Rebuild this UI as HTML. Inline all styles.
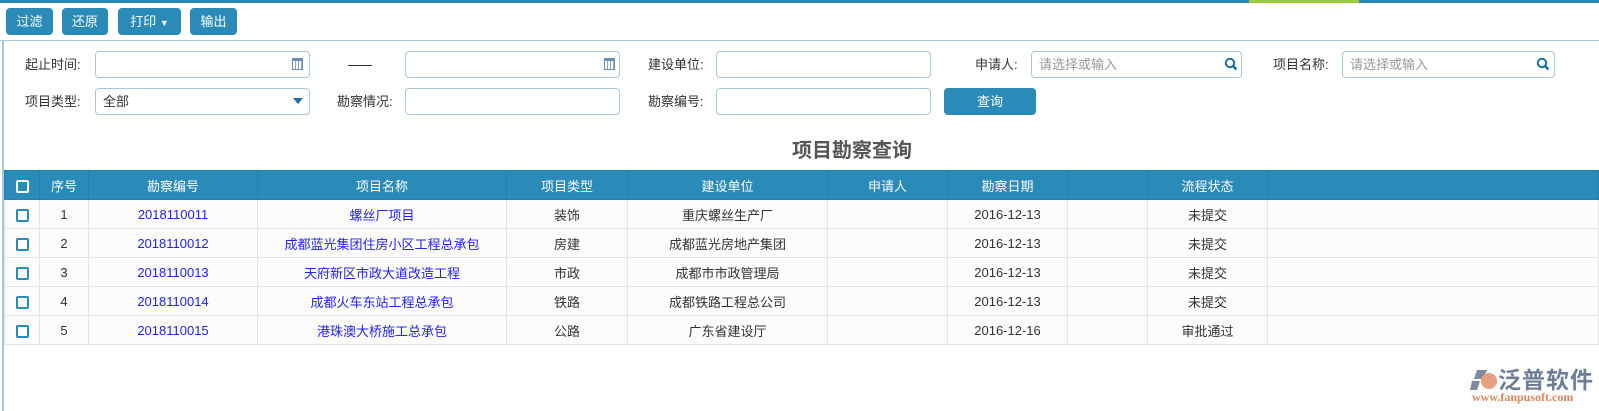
<!DOCTYPE html>
<html><head><meta charset="utf-8"><style>
*{margin:0;padding:0;box-sizing:border-box}
body{width:1599px;height:411px;background:#fff;font-family:"Liberation Sans","Noto Sans CJK SC",sans-serif;font-size:13px;color:#333;position:relative;overflow:hidden}
.a{position:absolute}
.btn{position:absolute;top:8px;height:27px;background:#2a8ab8;color:#fff;border-radius:4px;font-size:13px;line-height:27px;text-align:center}
.lbl{position:absolute;font-size:13px;color:#333;line-height:27px}
.in{position:absolute;height:27px;border:1px solid #a9c6dc;border-radius:4px;background:#fff;font-size:13px;line-height:25px;padding-left:7px;color:#999}
table{position:absolute;left:4px;top:170px;border-collapse:collapse;table-layout:fixed;width:1595px}
td,th{height:29px;text-align:center;font-size:13px;border:1px solid #e3e3e3;white-space:nowrap;overflow:hidden}
th{background:#2a8ab8;color:#fff;font-weight:normal;border-color:#2380ad}
td{color:#333;background:#fcfcfc}
td.l{color:#2222ee}
.cb{display:inline-block;width:13px;height:13px;border:2px solid #2a8ab8;border-radius:2px;vertical-align:middle;background:#fff}
th .cb{border-color:#fff;background:transparent}
</style></head><body>
<div class="a" style="left:0;top:0;width:1599px;height:3px;background:#2a8ab8"></div>
<div class="a" style="left:1249px;top:0;width:110px;height:3px;background:#9ccc3c"></div>
<div class="a" style="left:0;top:40px;width:1599px;height:1px;background:#a9c6dc"></div>
<div class="a" style="left:2px;top:40px;width:2px;height:371px;background:#a9c6dc"></div>
<div class="btn" style="left:6px;width:47px">过滤</div>
<div class="btn" style="left:62px;width:46px">还原</div>
<div class="btn" style="left:118px;width:63px">打印 <span style="font-size:9px">▼</span></div>
<div class="btn" style="left:190px;width:47px">输出</div>

<div class="lbl" style="left:25px;top:51px">起止时间:</div>
<div class="in" style="left:95px;top:51px;width:215px"></div>
<div class="a" style="left:292px;top:58px;width:11px;height:12px;border:1px solid #6a8fb0;border-top-width:3px;background:repeating-linear-gradient(90deg,#fff 0 2px,#9ab 2px 3px)"></div>
<div class="a" style="left:348px;top:65px;width:24px;height:1px;background:#333"></div>
<div class="in" style="left:405px;top:51px;width:215px"></div>
<div class="a" style="left:604px;top:58px;width:11px;height:12px;border:1px solid #6a8fb0;border-top-width:3px;background:repeating-linear-gradient(90deg,#fff 0 2px,#9ab 2px 3px)"></div>
<div class="lbl" style="left:648px;top:51px">建设单位:</div>
<div class="in" style="left:716px;top:51px;width:215px"></div>
<div class="lbl" style="left:975px;top:51px">申请人:</div>
<div class="in" style="left:1031px;top:51px;width:211px">请选择或输入</div>
<svg class="a" style="left:1224px;top:57px" width="14" height="14" viewBox="0 0 14 14"><circle cx="6" cy="6" r="4.2" fill="none" stroke="#1a6fa0" stroke-width="2"/><path d="M9 9l3.5 3.5" stroke="#1a6fa0" stroke-width="2.5"/></svg>
<div class="lbl" style="left:1273px;top:51px">项目名称:</div>
<div class="in" style="left:1342px;top:51px;width:213px">请选择或输入</div>
<svg class="a" style="left:1536px;top:57px" width="14" height="14" viewBox="0 0 14 14"><circle cx="6" cy="6" r="4.2" fill="none" stroke="#1a6fa0" stroke-width="2"/><path d="M9 9l3.5 3.5" stroke="#1a6fa0" stroke-width="2.5"/></svg>

<div class="lbl" style="left:25px;top:88px">项目类型:</div>
<div class="in" style="left:95px;top:88px;width:215px;color:#333">全部</div>
<div class="a" style="left:293px;top:98px;width:0;height:0;border-left:5px solid transparent;border-right:5px solid transparent;border-top:6px solid #1a6fa0"></div>
<div class="lbl" style="left:337px;top:88px">勘察情况:</div>
<div class="in" style="left:405px;top:88px;width:215px"></div>
<div class="lbl" style="left:648px;top:88px">勘察编号:</div>
<div class="in" style="left:716px;top:88px;width:215px"></div>
<div class="btn" style="left:944px;top:88px;width:92px">查询</div>

<div class="a" style="left:0;width:1704px;top:134px;text-align:center;font-size:20px;font-weight:bold;color:#555">项目勘察查询</div>

<table>
<colgroup><col style="width:35px"><col style="width:49px"><col style="width:169px"><col style="width:249px"><col style="width:121px"><col style="width:200px"><col style="width:120px"><col style="width:120px"><col style="width:80px"><col style="width:120px"><col></colgroup>
<tr><th><span class="cb"></span></th><th>序号</th><th>勘察编号</th><th>项目名称</th><th>项目类型</th><th>建设单位</th><th>申请人</th><th>勘察日期</th><th></th><th>流程状态</th><th></th></tr>
<tr><td><span class="cb"></span></td><td>1</td><td class="l">2018110011</td><td class="l">螺丝厂项目</td><td>装饰</td><td>重庆螺丝生产厂</td><td></td><td>2016-12-13</td><td></td><td>未提交</td><td></td></tr>
<tr><td><span class="cb"></span></td><td>2</td><td class="l">2018110012</td><td class="l">成都蓝光集团住房小区工程总承包</td><td>房建</td><td>成都蓝光房地产集团</td><td></td><td>2016-12-13</td><td></td><td>未提交</td><td></td></tr>
<tr><td><span class="cb"></span></td><td>3</td><td class="l">2018110013</td><td class="l">天府新区市政大道改造工程</td><td>市政</td><td>成都市市政管理局</td><td></td><td>2016-12-13</td><td></td><td>未提交</td><td></td></tr>
<tr><td><span class="cb"></span></td><td>4</td><td class="l">2018110014</td><td class="l">成都火车东站工程总承包</td><td>铁路</td><td>成都铁路工程总公司</td><td></td><td>2016-12-13</td><td></td><td>未提交</td><td></td></tr>
<tr><td><span class="cb"></span></td><td>5</td><td class="l">2018110015</td><td class="l">港珠澳大桥施工总承包</td><td>公路</td><td>广东省建设厅</td><td></td><td>2016-12-16</td><td></td><td>审批通过</td><td></td></tr>
</table>

<svg class="a" style="left:1470px;top:368px" width="28" height="24" viewBox="0 0 28 24"><path d="M7 2h10l-4 9H4z" fill="#7d8aa0"/><path d="M2 13h8l-3 9H0z" fill="#7d8aa0"/><circle cx="19" cy="13" r="8" fill="#e6a080"/></svg>
<div class="a" style="left:1498px;top:361px;font-size:23px;color:#6f7e96;font-weight:bold;letter-spacing:1px">泛普软件</div>
<div class="a" style="left:1472px;top:390px;font-size:12px;color:#d88560;font-family:'Liberation Serif',serif;font-weight:bold">www.fanpusoft.com</div>
</body></html>
